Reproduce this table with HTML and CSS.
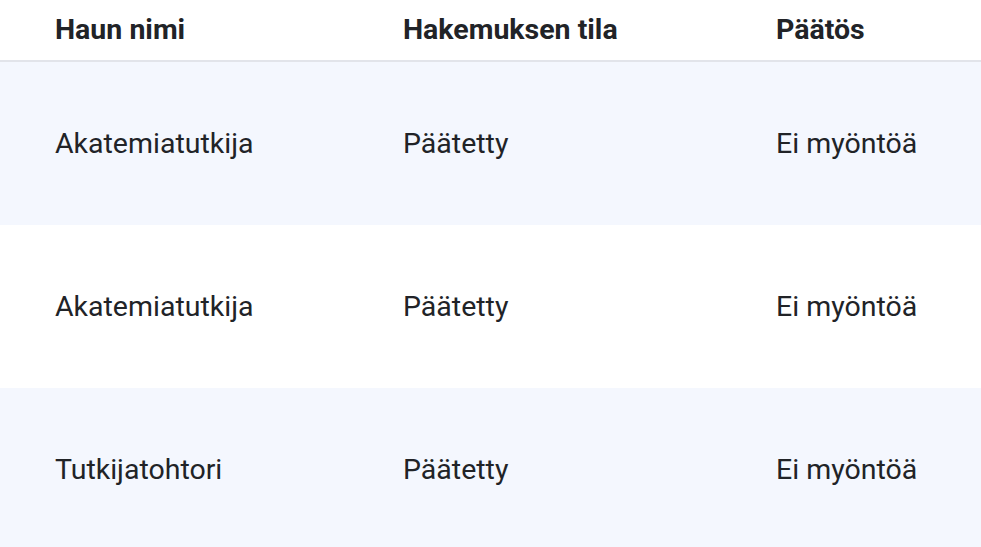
FILE: index.html
```html
<!DOCTYPE html>
<html lang="fi">
<head>
<meta charset="utf-8">
<title>Hakemukset</title>
<link rel="stylesheet" href="styles.css">
</head>
<body>
<div class="table">
  <div class="row head">
    <div class="cell c1">Haun nimi</div>
    <div class="cell c2">Hakemuksen tila</div>
    <div class="cell c3">Päätös</div>
  </div>
  <div class="row alt">
    <div class="cell c1">Akatemiatutkija</div>
    <div class="cell c2">Päätetty</div>
    <div class="cell c3">Ei myöntöä</div>
  </div>
  <div class="row">
    <div class="cell c1">Akatemiatutkija</div>
    <div class="cell c2">Päätetty</div>
    <div class="cell c3">Ei myöntöä</div>
  </div>
  <div class="row alt">
    <div class="cell c1">Tutkijatohtori</div>
    <div class="cell c2">Päätetty</div>
    <div class="cell c3">Ei myöntöä</div>
  </div>
</div>
</body>
</html>
```
FILE: styles.css
```css
html, body {
  margin: 0;
  padding: 0;
  background: #ffffff;
}
body {
  font-family: Roboto, "Liberation Sans", sans-serif;
  color: #212327;
  overflow: hidden;
}
.table {
  display: flex;
  flex-direction: column;
}
.row {
  display: grid;
  grid-template-columns: 403px 373px 1fr;
  align-items: center;
  height: 163px;
  font-size: 28.5px;
}
.row.alt {
  background: #f4f7fe;
}
.row.head {
  font-weight: 700;
  border-bottom: 2px solid #e2e4ea;
  box-sizing: border-box;
  height: 62px;
  padding-bottom: 2px;
}
.cell.c1 {
  padding-left: 55px;
}
```
